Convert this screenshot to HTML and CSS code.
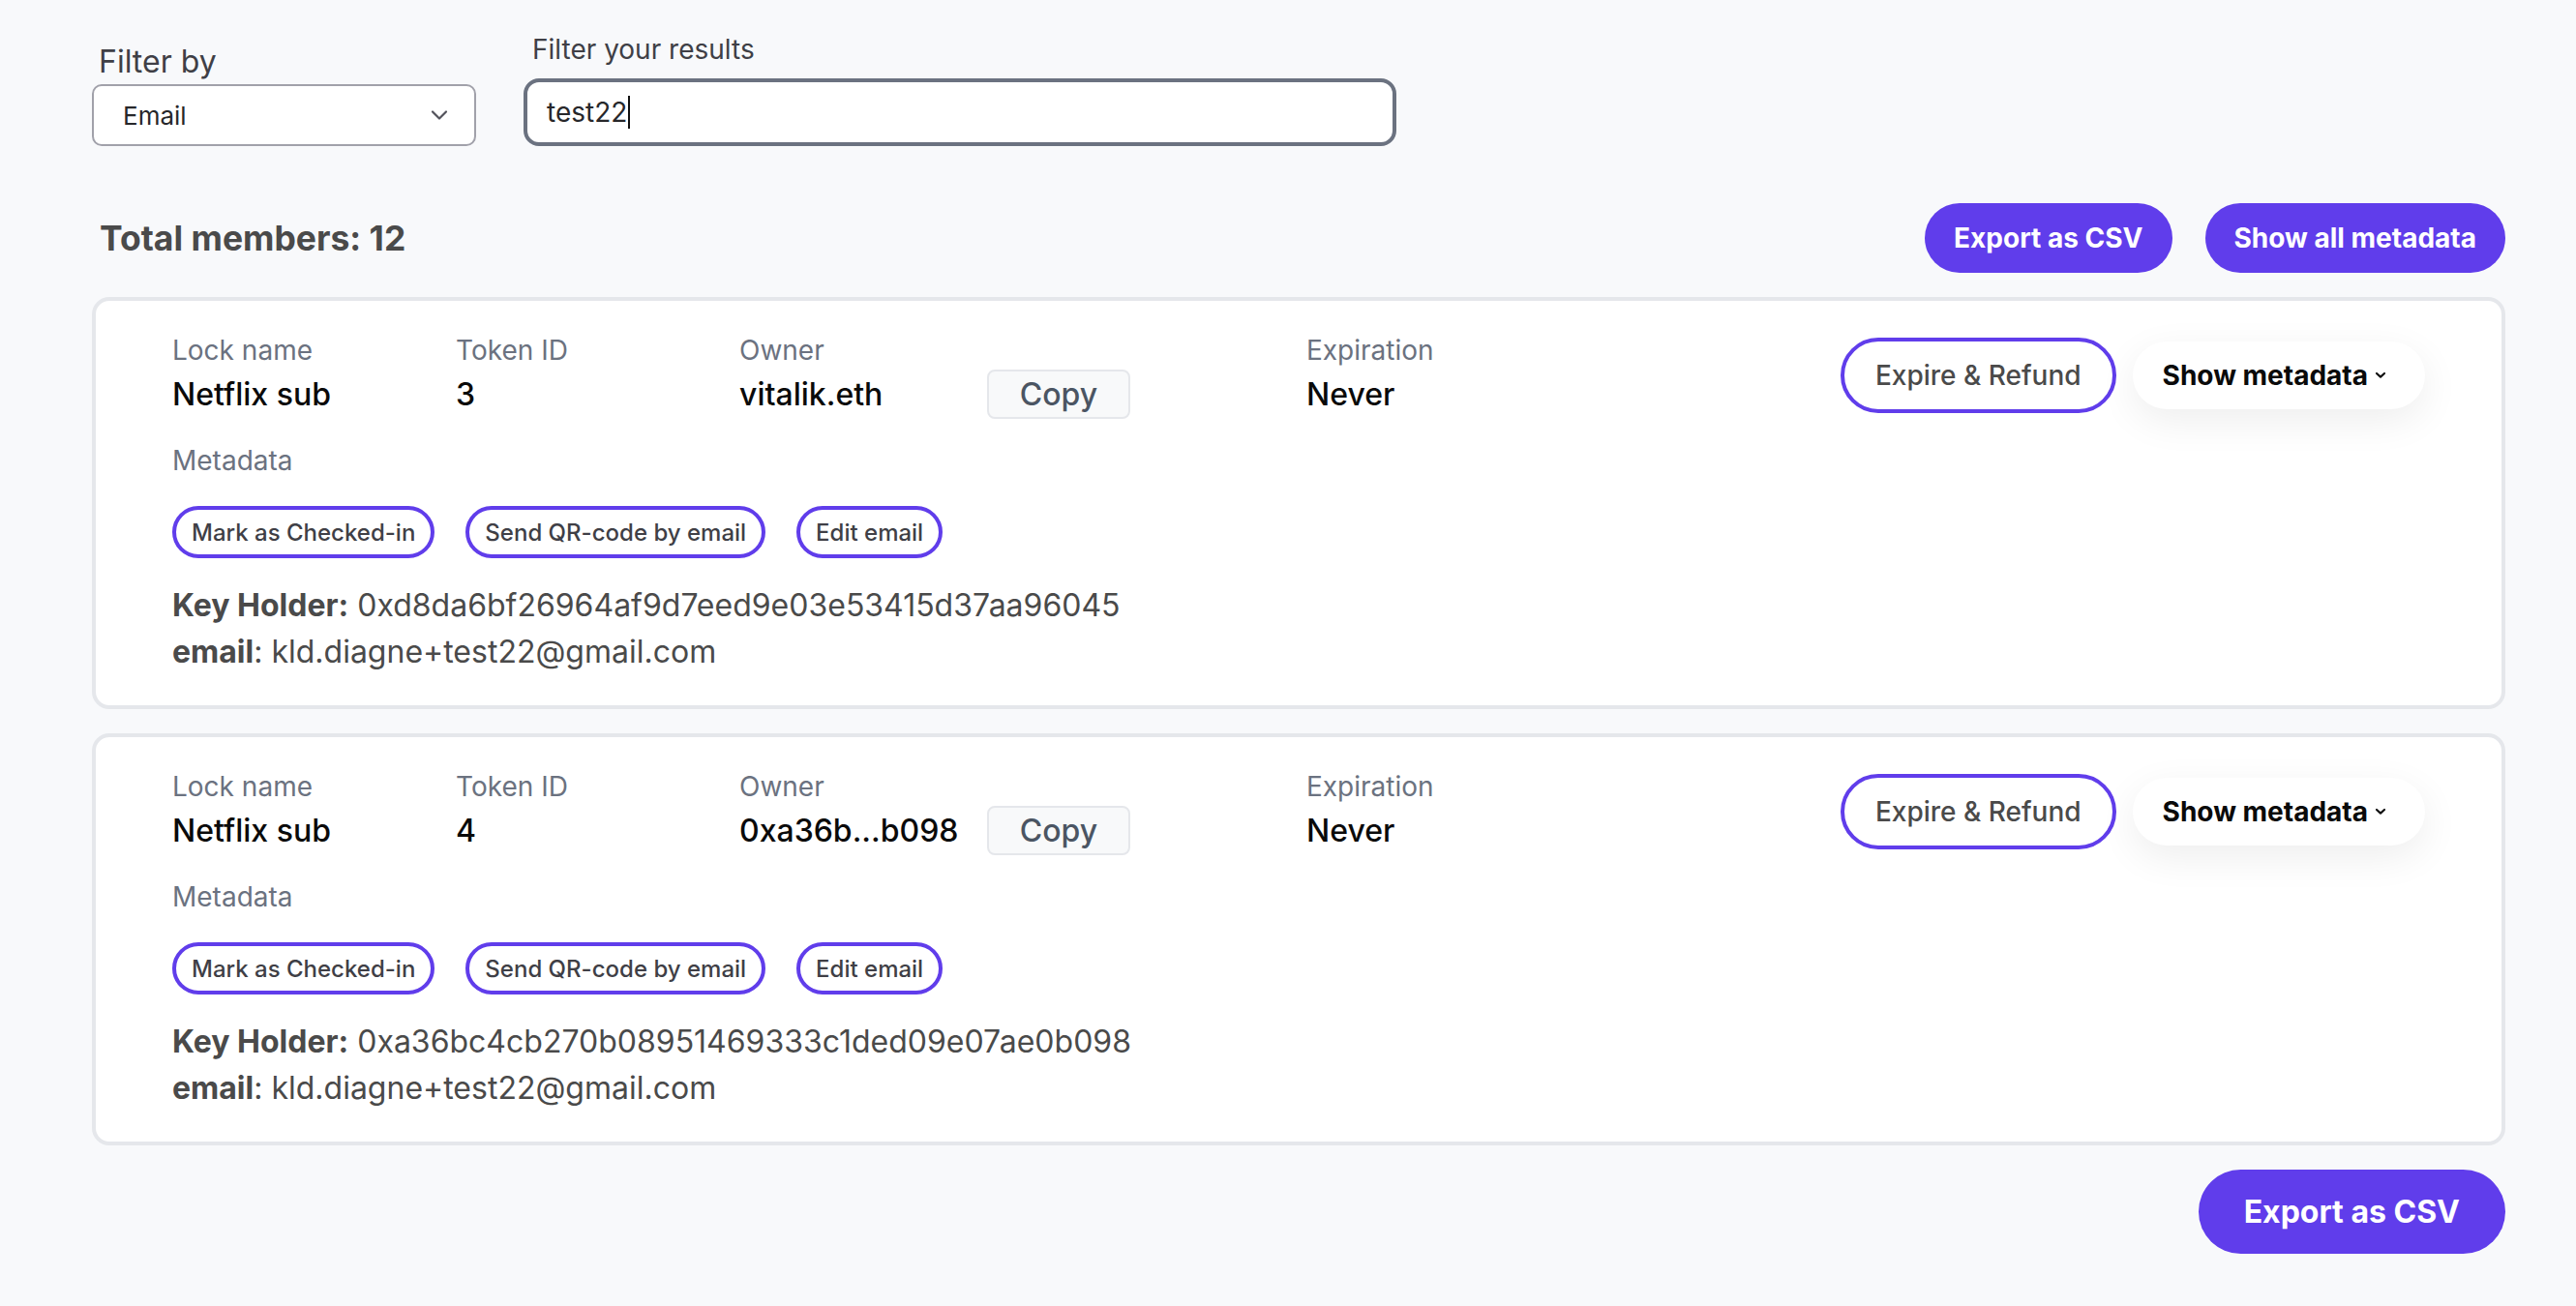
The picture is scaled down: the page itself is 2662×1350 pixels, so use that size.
FILE: index.html
```html
<!DOCTYPE html>
<html lang="en">
<head>
<meta charset="utf-8">
<title>Members</title>
<link rel="stylesheet" href="styles.css">
</head>
<body>
<main class="page">
  <section class="filters">
    <div class="field field-by">
      <label class="label-by">Filter by</label>
      <div class="select">
        <span>Email</span>
        <svg class="select-chevron" width="18" height="12" viewBox="0 0 18 12"><path d="M2 2.5 L9 9.5 L16 2.5" fill="none" stroke="#52525b" stroke-width="2.2" stroke-linecap="round" stroke-linejoin="round"/></svg>
      </div>
    </div>
    <div class="field field-query">
      <label class="label-query">Filter your results</label>
      <div class="input"><span>test22</span><span class="caret"></span></div>
    </div>
  </section>

  <section class="summary">
    <h2 class="total">Total members: 12</h2>
    <div class="actions">
      <button class="btn-primary">Export as CSV</button>
      <button class="btn-primary">Show all metadata</button>
    </div>
  </section>

  <div class="cards">
    <article class="card">
      <div class="card-top">
        <div class="cols">
          <div class="col"><div class="col-label">Lock name</div><div class="col-value">Netflix sub</div></div>
          <div class="col"><div class="col-label">Token ID</div><div class="col-value">3</div></div>
          <div class="col"><div class="col-label">Owner</div><div class="col-value"><span class="owner-val">vitalik.eth</span><button class="copy">Copy</button></div></div>
          <div class="col"><div class="col-label">Expiration</div><div class="col-value">Never</div></div>
        </div>
        <div class="card-actions">
          <button class="btn-outline">Expire &amp; Refund</button>
          <button class="btn-meta">Show metadata<svg width="12" height="8" viewBox="0 0 12 8"><path d="M2 2 L6 5.6 L10 2" fill="none" stroke="#111" stroke-width="2.2" stroke-linecap="round" stroke-linejoin="round"/></svg></button>
        </div>
      </div>
      <div class="meta-label">Metadata</div>
      <div class="chips">
        <button class="chip">Mark as Checked-in</button>
        <button class="chip">Send QR-code by email</button>
        <button class="chip">Edit email</button>
      </div>
      <div class="details">
        <p><b>Key Holder:</b> 0xd8da6bf26964af9d7eed9e03e53415d37aa96045</p>
        <p><b>email</b>: kld.diagne+test22@gmail.com</p>
      </div>
    </article>

    <article class="card">
      <div class="card-top">
        <div class="cols">
          <div class="col"><div class="col-label">Lock name</div><div class="col-value">Netflix sub</div></div>
          <div class="col"><div class="col-label">Token ID</div><div class="col-value">4</div></div>
          <div class="col"><div class="col-label">Owner</div><div class="col-value"><span class="owner-val">0xa36b...b098</span><button class="copy">Copy</button></div></div>
          <div class="col"><div class="col-label">Expiration</div><div class="col-value">Never</div></div>
        </div>
        <div class="card-actions">
          <button class="btn-outline">Expire &amp; Refund</button>
          <button class="btn-meta">Show metadata<svg width="12" height="8" viewBox="0 0 12 8"><path d="M2 2 L6 5.6 L10 2" fill="none" stroke="#111" stroke-width="2.2" stroke-linecap="round" stroke-linejoin="round"/></svg></button>
        </div>
      </div>
      <div class="meta-label">Metadata</div>
      <div class="chips">
        <button class="chip">Mark as Checked-in</button>
        <button class="chip">Send QR-code by email</button>
        <button class="chip">Edit email</button>
      </div>
      <div class="details">
        <p><b>Key Holder:</b> 0xa36bc4cb270b08951469333c1ded09e07ae0b098</p>
        <p><b>email</b>: kld.diagne+test22@gmail.com</p>
      </div>
    </article>
  </div>

  <div class="footer">
    <button class="btn-primary btn-lg">Export as CSV</button>
  </div>
</main>
</body>
</html>
```

FILE: styles.css
```css
* { box-sizing: border-box; }

html, body {
  margin: 0;
  background: #f8f9fb;
}

body {
  font-family: Inter, "Noto Sans", "Liberation Sans", sans-serif;
  color: #4a4a4a;
}

button {
  font-family: inherit;
  cursor: pointer;
}

.page {
  padding: 31px 73px 40px 95px;
}

/* Filters */
.filters {
  display: flex;
  align-items: flex-end;
  gap: 49px;
}

.field {
  display: flex;
  flex-direction: column;
}

.label-by {
  font-size: 32px;
  line-height: 44px;
  margin: 0 0 1px 7px;
  color: #3f3f46;
}

.label-query {
  font-size: 28px;
  line-height: 40px;
  margin: 0 0 10px 9px;
  color: #3f3f46;
}

.select {
  width: 397px;
  height: 64px;
  background: #fff;
  border: 2px solid #a1a1aa;
  border-radius: 10px;
  display: flex;
  align-items: center;
  justify-content: space-between;
  padding: 0 27px 0 30px;
  font-size: 26px;
  color: #27272a;
}

.input {
  width: 902px;
  height: 70px;
  background: #fff;
  border: 4px solid #6b7280;
  border-radius: 16px;
  display: flex;
  align-items: center;
  padding: 0 20px;
  font-size: 28px;
  color: #27272a;
}

.caret {
  display: inline-block;
  width: 2px;
  height: 34px;
  background: #111;
  margin-left: 1px;
}

/* Summary */
.summary {
  margin-top: 59px;
  display: flex;
  justify-content: space-between;
  align-items: center;
}

.total {
  margin: 0 0 0 8px;
  font-size: 35.5px;
  font-weight: 700;
  color: #4a4a4a;
}

.actions {
  display: flex;
  gap: 34px;
}

.btn-primary {
  height: 72px;
  padding: 0 30px;
  border: none;
  border-radius: 999px;
  background: #603deb;
  color: #fff;
  font-size: 28px;
  font-weight: 700;
}

.btn-lg {
  height: 87px;
  padding: 0 47px;
  font-size: 32px;
}

/* Cards */
.cards {
  margin-top: 25px;
  display: flex;
  flex-direction: column;
  gap: 25px;
}

.card {
  background: #fff;
  border: 4px solid #e5e7eb;
  border-radius: 18px;
  padding: 31px 79px 31px 79px;
}

.card-top {
  display: flex;
  align-items: center;
}

.cols {
  flex: 1;
  display: grid;
  grid-template-columns: 293px 293px 586px auto;
}

.col-label {
  font-size: 28px;
  line-height: 40px;
  color: #6b7280;
}

.col-value {
  height: 51px;
  display: flex;
  align-items: center;
  font-size: 32px;
  font-weight: 500;
  color: #0a0a0a;
}

.owner-val {
  width: 256px;
}

.copy {
  width: 148px;
  height: 51px;
  background: #f8f9fa;
  border: 2px solid #e5e7eb;
  border-radius: 8px;
  font-size: 32px;
  font-weight: 500;
  color: #4b5563;
  padding: 0;
}

.card-actions {
  display: flex;
  align-items: center;
  gap: 17px;
}

.btn-outline {
  height: 78px;
  padding: 0 32px;
  border: 4px solid #603deb;
  border-radius: 999px;
  background: #fff;
  font-size: 28px;
  font-weight: 500;
  color: #4a4a4a;
}

.btn-meta {
  height: 70px;
  padding: 0 40px 0 31px;
  border: none;
  border-radius: 999px;
  background: #fff;
  box-shadow: 0 12px 40px rgba(0, 0, 0, 0.07);
  font-size: 28px;
  font-weight: 700;
  color: #0a0a0a;
  display: flex;
  align-items: center;
  gap: 7px;
}

.meta-label {
  margin-top: 23px;
  font-size: 28px;
  line-height: 40px;
  color: #6b7280;
}

.chips {
  margin-top: 27px;
  display: flex;
  gap: 32px;
}

.chip {
  height: 54px;
  padding: 0 16px;
  border: 4px solid #603deb;
  border-radius: 999px;
  background: #fff;
  font-size: 24px;
  font-weight: 500;
  color: #3f3f46;
}

.details {
  margin-top: 25px;
}

.details p {
  margin: 0;
  font-size: 32px;
  line-height: 48px;
  color: #4a4a4a;
}

.details b {
  font-weight: 700;
}

.footer {
  margin-top: 25px;
  display: flex;
  justify-content: flex-end;
}
```
